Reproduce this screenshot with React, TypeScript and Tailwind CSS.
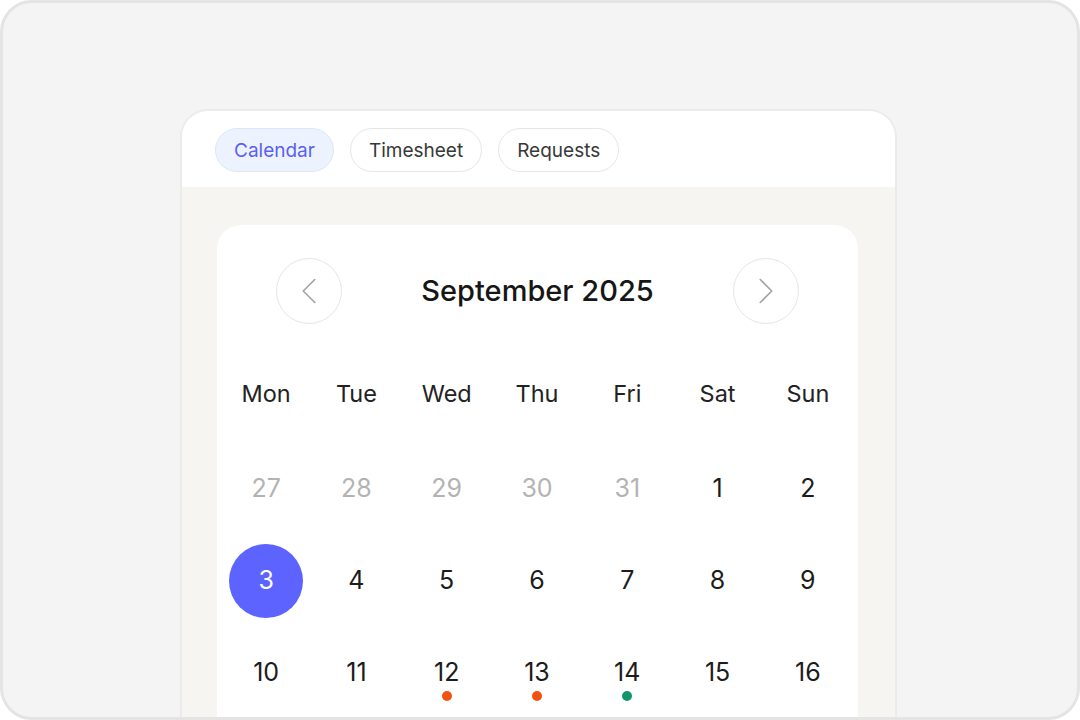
import React from 'react';
import { ChevronLeft, ChevronRight } from 'lucide-react';

const tabs = ['Calendar', 'Timesheet', 'Requests'];
const weekdays = ['Mon', 'Tue', 'Wed', 'Thu', 'Fri', 'Sat', 'Sun'];

type Day = { n: number; muted?: boolean; selected?: boolean; dot?: 'orange' | 'green' };

const weeks: Day[][] = [
  [{ n: 27, muted: true }, { n: 28, muted: true }, { n: 29, muted: true }, { n: 30, muted: true }, { n: 31, muted: true }, { n: 1 }, { n: 2 }],
  [{ n: 3, selected: true }, { n: 4 }, { n: 5 }, { n: 6 }, { n: 7 }, { n: 8 }, { n: 9 }],
  [{ n: 10 }, { n: 11 }, { n: 12, dot: 'orange' }, { n: 13, dot: 'orange' }, { n: 14, dot: 'green' }, { n: 15 }, { n: 16 }],
];

const DayCell = ({ day }: { day: Day }) => {
  return (
    <div className="relative flex h-[92px] items-center justify-center">
      {day.selected ? (
        <div className="flex h-[74px] w-[74px] items-center justify-center rounded-full bg-[#5d63ff] text-white">
          {day.n}
        </div>
      ) : (
        <span className={day.muted ? 'text-[#b3b3b3]' : 'text-[#1c1c1c]'}>{day.n}</span>
      )}
      {day.dot && (
        <span
          className={`absolute left-1/2 top-[64px] h-[10px] w-[10px] -translate-x-1/2 rounded-full ${
            day.dot === 'orange' ? 'bg-[#f2520f]' : 'bg-[#10966a]'
          }`}
        />
      )}
    </div>
  );
};

const App = () => {
  return (
    <div className="h-[720px] w-[1080px] bg-white font-['Inter',sans-serif]">
      <div className="h-full w-full overflow-hidden rounded-[32px] border-[3px] border-[#e4e4e4] bg-[#f4f4f4]">
        <div className="ml-[177px] mt-[106px] w-[717px] overflow-hidden rounded-t-[28px] border-2 border-b-0 border-[#ebebeb] bg-[#f6f5f1]">
          {/* tabs */}
          <div className="flex gap-4 bg-white pb-[15px] pl-[33px] pt-[17px]">
            {tabs.map((t, i) => (
              <div
                key={t}
                className={`flex h-[44px] items-center rounded-full border-[1.5px] px-[18px] pt-[3px] text-[19px] ${
                  i === 0
                    ? 'border-[#dce6f6] bg-[#edf3fe] text-[#5a5ff5]'
                    : 'border-[#e6e6e6] bg-white text-[#383838]'
                }`}
              >
                {t}
              </div>
            ))}
          </div>

          <div className="pl-[35px] pr-[37px] pt-[38px]">
            <div className="rounded-t-[24px] bg-white pb-10 pl-[4px] pr-[5px] pt-[33px]">
              <div className="flex items-center justify-between pl-[55px] pr-[54px]">
                <button className="flex h-[66px] w-[66px] items-center justify-center rounded-full border-[1.5px] border-[#e6e6e6] bg-white text-[#a3a3a3]">
                  <ChevronLeft size={46} strokeWidth={0.85} />
                </button>
                <div className="text-[29px] font-medium text-[#161616]">September 2025</div>
                <button className="flex h-[66px] w-[66px] items-center justify-center rounded-full border-[1.5px] border-[#e6e6e6] bg-white text-[#a3a3a3]">
                  <ChevronRight size={46} strokeWidth={0.85} />
                </button>
              </div>

              <div className="mt-6 grid grid-cols-7 text-[23.5px]">
                {weekdays.map((w) => (
                  <div key={w} className="flex h-[92px] items-center justify-center text-[#222]">
                    {w}
                  </div>
                ))}
              </div>

              <div className="mt-[3px] grid grid-cols-7 text-[25px]">
                {weeks.flat().map((d, i) => (
                  <DayCell key={i} day={d} />
                ))}
              </div>
            </div>
          </div>
        </div>
      </div>
    </div>
  );
};

export default App;
